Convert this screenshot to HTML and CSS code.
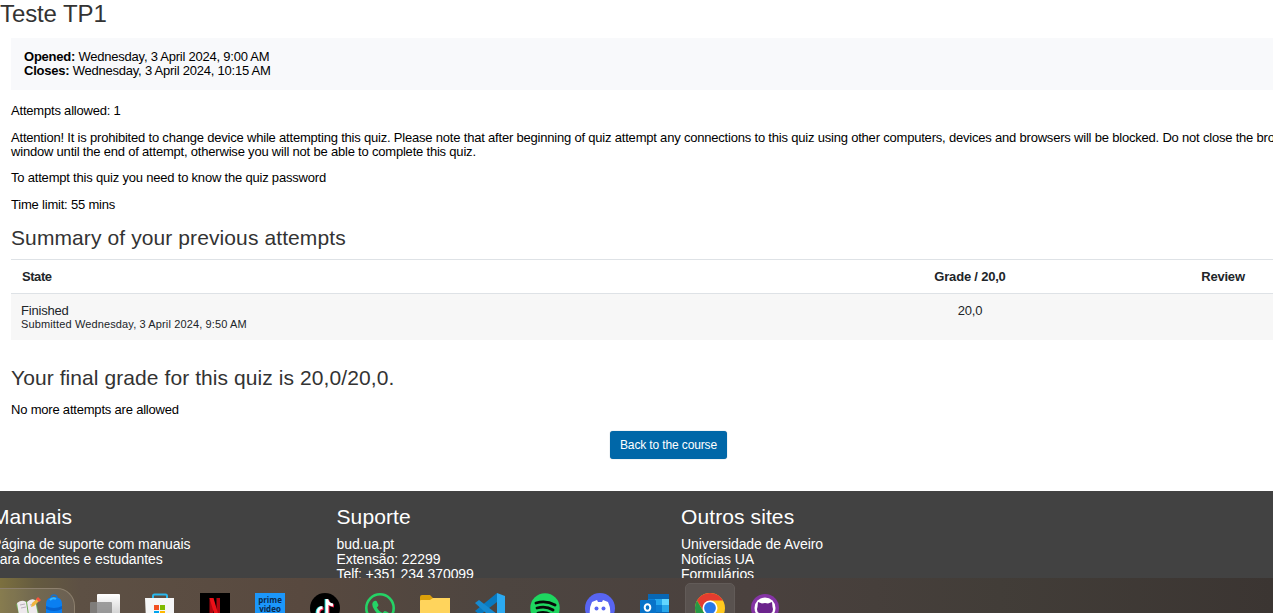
FILE: index.html
```html
<!DOCTYPE html>
<html lang="en">
<head>
<meta charset="utf-8">
<title>Teste TP1</title>
<link rel="stylesheet" href="styles.css">
</head>
<body>
<div class="screen">
  <main class="page">
    <h1 class="title">Teste TP1</h1>
    <section class="quiz">
      <div class="dates">
        <div class="opened"><strong>Opened:</strong> Wednesday, 3 April 2024, 9:00 AM</div>
        <div class="closes"><strong>Closes:</strong> Wednesday, 3 April 2024, 10:15 AM</div>
      </div>
      <p class="allowed">Attempts allowed: 1</p>
      <p class="notice">Attention! It is prohibited to change device while attempting this quiz. Please note that after beginning of quiz attempt any connections to this quiz using other computers, devices and browsers will be blocked. Do not close the browser<br>window until the end of attempt, otherwise you will not be able to complete this quiz.</p>
      <p class="password">To attempt this quiz you need to know the quiz password</p>
      <p class="limit">Time limit: 55 mins</p>
      <h2 class="heading summary">Summary of your previous attempts</h2>
      <table class="attempts">
        <thead><tr><th class="state">State</th><th class="grade">Grade / 20,0</th><th class="review">Review</th></tr></thead>
        <tbody><tr><td class="state">Finished<small>Submitted Wednesday, 3 April 2024, 9:50 AM</small></td><td class="grade">20,0</td><td class="review"></td></tr></tbody>
      </table>
      <h2 class="heading final">Your final grade for this quiz is 20,0/20,0.</h2>
      <p class="nomore">No more attempts are allowed</p>
      <div class="actions"><button class="back" type="button">Back to the course</button></div>
    </section>
  </main>
  <footer class="footer">
    <div class="column"><h3>Manuais</h3><div>Página de suporte com manuais<br>para docentes e estudantes</div></div>
    <div class="column"><h3>Suporte</h3><div>bud.ua.pt<br>Extensão: 22299<br>Telf: +351 234 370099</div></div>
    <div class="column"><h3>Outros sites</h3><div>Universidade de Aveiro<br>Notícias UA<br>Formulários</div></div>
  </footer>
  <nav class="taskbar">
    <div class="search">
      <svg width="76" height="26" viewBox="0 0 76 26">
        <path d="M16 15l10-3 2 2 8-2 3 14H19z" fill="#6fae55"/>
        <path d="M17 14q5-4 9-1l2 13h-9zM27 13q4-4 8-2l3 15h-9z" fill="#eee9ed"/>
        <path d="M20 16l5-1M21 19l5-1M30 16l5-1" stroke="#bbb0bd"/>
        <path d="M31 18l1-4 6-5 2 2-6 6z" fill="#f1b540"/><path d="M36 10l2-2 3 3-2 2z" fill="#f4553d"/>
        <path d="M51 9q0-3 3-3t3 3" fill="none" stroke="#1b70c7" stroke-width="1.500"/>
        <path d="M46 26V15q0-7 8-7t8 7v11z" fill="#0a7ff1"/><path d="M46 17q8 4 16 0v3q-8 4-16 0z" fill="#0462d0"/><path d="M50 11q3-3 6-1" fill="none" stroke="#36b9ff" stroke-width="2"/>
      </svg>
    </div>
    <svg class="app" viewBox="0 0 30 30"><defs><linearGradient id="view" x2="0" y2="1"><stop stop-color="#fff"/><stop offset="1" stop-color="#cacaca"/></linearGradient></defs><rect x="7" y="1" width="23" height="24" rx="1" fill="url(#view)"/><rect x="0" y="9" width="22" height="22" rx="1" fill="#888" opacity=".8"/></svg>
    <svg class="app" viewBox="0 0 30 30"><path d="M8 6V3q0-1.5 1.5-1.5h11Q22 1.5 22 3v3" fill="none" stroke="#29b8ee" stroke-width="2"/><path d="M0 5h29v22q0 3-3 3H4q-3 0-3-3z" fill="#f5f6f7"/><path d="M9 12h5v5H9z" fill="#f25022"/><path d="M15 12h5v5h-5z" fill="#7fba00"/><path d="M9 18h5v5H9z" fill="#00a4ef"/><path d="M15 18h5v5h-5z" fill="#ffb900"/></svg>
    <svg class="app" viewBox="0 0 30 30"><path d="M0 0h30v30H0z" fill="#000"/><path d="M9.500 5h3.700v22H9.500zM16.500 5h3.500v22h-3.500z" fill="#b10610"/><path d="M9.500 5h4L20 27h-4z" fill="#ed1018"/></svg>
    <svg class="app" viewBox="0 0 30 30"><path d="M0 0h30v30H0z" fill="#1b97fb"/><text class="prime" x="15" y="10" text-anchor="middle">prime</text><text class="prime" x="15" y="18.500" text-anchor="middle">video</text></svg>
    <svg class="app" viewBox="0 0 30 30"><circle cx="15" cy="15" r="15" fill="#000"/><g fill="none" stroke-width="2.800"><path d="M16 6v13a4.500 4.500 0 1 1-4.500-4.500M16 6q0 5 6 6" stroke="#25e5e2"/><path d="M18 7v13a4.500 4.500 0 1 1-4.500-4.500M18 7q0 5 6 6" stroke="#fb2751"/><path d="M17 6v13a4.500 4.500 0 1 1-4.500-4.500M17 6q0 5 6 6" stroke="#fff"/></g></svg>
    <svg class="app" viewBox="0 0 30 30"><circle cx="15" cy="15" r="13.700" fill="none" stroke="#25d366" stroke-width="2.600"/><path d="M8 9q2-2 3.500-1l2 4q0 1-1.700 2.500 2 4 5.700 5.500l2-2q1-.5 4.500 2-1 4-5 4Q13 23 9.500 17 6 12 8 9z" fill="#25d366"/></svg>
    <svg class="app" viewBox="0 0 30 30"><path d="M0 4q0-2 2-2h8l3 3h17v10H0z" fill="#dca00a"/><path d="M0 8q0-1 1-1h9l3-2h17v25H0z" fill="#ffd45c"/></svg>
    <svg class="app" viewBox="0 0 30 30"><path d="M22 0l8 3v24l-8 3z" fill="#2baaf2"/><path d="M22 0v9L5 22 0 18z" fill="#087ac1"/><path d="M0 10l4-3 18 14v9z" fill="#168ad0"/></svg>
    <svg class="app" viewBox="0 0 30 30"><circle cx="15" cy="15" r="14.700" fill="#1ed760"/><path d="M6 10q10-3 19 2M7 15q9-2.500 16 2M8 20q8-2 13 2" fill="none" stroke="#080b09" stroke-width="2.800" stroke-linecap="round"/></svg>
    <svg class="app" viewBox="0 0 30 30"><circle cx="15" cy="15" r="15" fill="#5865f2"/><path d="M7 9l5-2 1 2h4l1-2 5 2q3 6 2 13l-5 2-1-2h-8l-1 2-5-2Q4 15 7 9z" fill="#fff"/><circle cx="11.500" cy="15.500" r="2" fill="#5865f2"/><circle cx="18.500" cy="15.500" r="2" fill="#5865f2"/></svg>
    <svg class="app" viewBox="0 0 30 30"><path d="M8 1h21v26H8z" fill="#0867b5"/><path d="M8 6h8v12H8z" fill="#087fda"/><path d="M15 6h7v6h-7z" fill="#25a7ed"/><path d="M22 6h7v6h-7z" fill="#62d6ff"/><path d="M15 12h7v7h-7z" fill="#0b7ed4"/><path d="M22 12h7v7h-7z" fill="#28a8ea"/><rect y="7" width="16" height="17" rx="1" fill="#0873c9"/><ellipse cx="7.500" cy="14.500" rx="2.800" ry="3.300" fill="none" stroke="#fff" stroke-width="2"/></svg>
    <div class="active"><svg class="app" viewBox="0 0 30 30"><circle cx="15" cy="15" r="15" fill="#ffc91e"/><path d="M15 0A15 15 0 0 1 28 7.500H15L9 19 2 7.500A15 15 0 0 1 15 0z" fill="#e43c2f"/><path d="M2 7.500l6.500 11.200L15 22l-3 7.700A15 15 0 0 1 2 7.500z" fill="#279847"/><circle cx="15" cy="15" r="7.500" fill="#fff"/><circle cx="15" cy="15" r="5.900" fill="#2878e8"/></svg></div>
    <svg class="app" viewBox="0 0 30 30"><circle cx="15" cy="15" r="14" fill="#8534a5"/><circle cx="15" cy="15" r="10.500" fill="#fff"/><path d="M8 9l4 1.500q3-1 6 0L22 9l.5 5q2 6-4.500 7v5h-6v-5q-6.500-1-4.500-7z" fill="#6b238c"/></svg>
  </nav>
</div>
</body>
</html>
```
FILE: styles.css
```css
* { box-sizing: border-box; }
body { margin: 0; background: #fff; overflow: hidden; font-family: "Liberation Sans", Arial, sans-serif; }
.screen { width: 1273px; height: 613px; display: grid; grid-template-rows: 491px 87px 35px; overflow: hidden; }
.page { overflow: hidden; color: #000; font-size: 13px; line-height: 14px; letter-spacing: -.2px; }
.title { margin: 0; height: 38px; font-size: 24px; font-weight: 400; line-height: 28px; letter-spacing: -.1px; color: #333; }
.quiz { padding-left: 11px; }
.dates { height: 52px; padding: 12px 13px; background: #f8f9fb; white-space: nowrap; letter-spacing: -.23px; }
p { margin: 0 0 13px; white-space: nowrap; }
.allowed { margin-top: 14px; }
.notice { margin-bottom: 12px; }
.heading { margin: 0; font-size: 21px; font-weight: 400; line-height: 26px; color: #333; white-space: nowrap; letter-spacing: .1px; }
.summary { height: 34px; }
.attempts { width: 1346px; table-layout: fixed; border-collapse: separate; border-spacing: 0; color: #212529; }
th { height: 35px; padding: 0 10px; border-top: 1px solid #dee2e6; border-bottom: 1px solid #dee2e6; text-align: center; }
th.state { width: 840px; padding-left: 11px; text-align: left; letter-spacing: -.45px; }
th.grade { width: 238px; }
td { height: 46px; padding: 10px 10px 8px; background: #f7f7f7; text-align: center; vertical-align: top; }
td.state { text-align: left; }
small { display: block; height: 14px; font-size: 11px; line-height: 13px; letter-spacing: .13px; }
.final { margin: 25px 0 12px; letter-spacing: .08px; }
.nomore { margin-bottom: 14px; }
.actions { padding-left: 599px; }
.back { display: block; width: 117px; height: 28px; padding: 0; border: 0; border-radius: 3px; background: #0067a8; color: #fff; font: 12px/28px "Liberation Sans", Arial, sans-serif; letter-spacing: -.13px; box-shadow: 0 0 1px #6e8ca0; white-space: nowrap; }
.footer { display: grid; grid-template-columns: 344.500px 344.500px 1fr; padding: 13px 0 0 337px; margin-left: -345px; width: 1618px; background: #424242; color: #fff; font-size: 14px; line-height: 15px; overflow: hidden; letter-spacing: -.08px; }
.footer h3 { margin: 0 0 7px; font-size: 21px; line-height: 26px; font-weight: 400; letter-spacing: .1px; }
.taskbar { display: flex; gap: 25px; align-items: flex-start; padding-top: 15px; background: linear-gradient(90deg, #7c703f 0, #655b40 35px, #5d5044 80px, #58493f 300px, #4d4540 500px, #4a413e 750px, #423d38 1000px, #3b3532 1273px); overflow: hidden; }
.app { width: 30px; height: 30px; flex: 0 0 30px; display: block; }
.search { width: 75px; height: 35px; flex: 0 0 75px; margin: -5px -10px 0 0; border: 1px solid #8d806e; border-left: 0; border-radius: 0 18px 0 0; background: #ffffff16; overflow: hidden; }
.search svg { display: block; }
.prime { font: bold 8px "Open Sans", "Liberation Sans", sans-serif; fill: #0b294b; }
.active { width: 50px; height: 40px; flex: 0 0 50px; margin: -10px -10px 0; padding: 9px 9px 0; border: 1px solid #625b58; border-radius: 5px; background: #59524f; }
```
